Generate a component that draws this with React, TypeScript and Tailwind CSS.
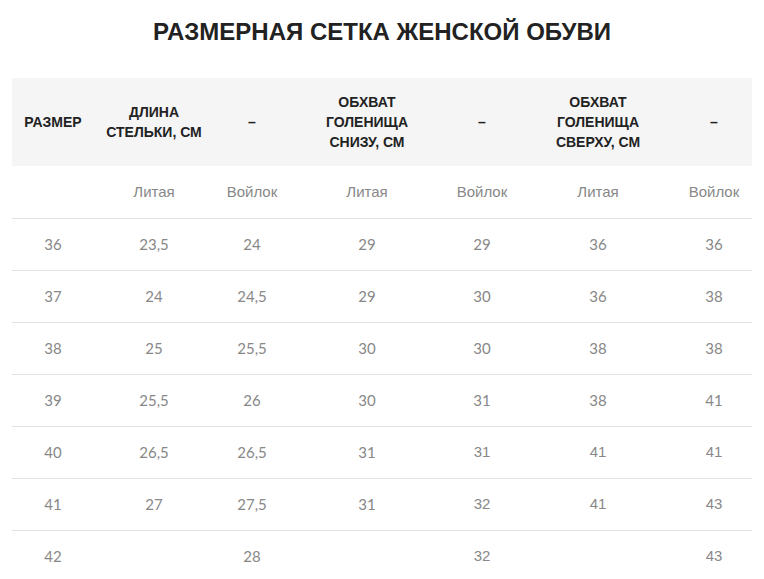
const heads = [
  ["Размер"],
  ["Длина", "стельки, см"],
  ["–"],
  ["Обхват", "голенища", "снизу, см"],
  ["–"],
  ["Обхват", "голенища", "сверху, см"],
  ["–"],
];

const kinds = ["", "Литая", "Войлок", "Литая", "Войлок", "Литая", "Войлок"];

const rows = [
  ["36", "23,5", "24", "29", "29", "36", "36"],
  ["37", "24", "24,5", "29", "30", "36", "38"],
  ["38", "25", "25,5", "30", "30", "38", "38"],
  ["39", "25,5", "26", "30", "31", "38", "41"],
  ["40", "26,5", "26,5", "31", "31", "41", "41"],
  ["41", "27", "27,5", "31", "32", "41", "43"],
  ["42", "", "28", "", "32", "", "43"],
];

// cells pasted with a different font in the original
const arialCells = new Set(["4-4", "4-5", "4-6", "5-4", "5-5", "5-6", "6-4", "6-6"]);

const widths = ["w-[82px]", "w-[120px]", "w-[76px]", "w-[154px]", "w-[76px]", "w-[156px]", "w-[76px]"];

export default function App() {
  return (
    <div className="min-h-[579px] bg-white px-3 font-['Liberation_Sans',Arial,sans-serif]">
      <h1 className="pt-[17px] pb-[31px] text-center text-[24px] leading-[30px] font-bold text-[#222]">
        РАЗМЕРНАЯ СЕТКА ЖЕНСКОЙ ОБУВИ
      </h1>
      <table className="w-[740px] table-fixed border-collapse">
        <thead>
          <tr className="h-[88px] bg-[#f5f5f5]">
            {heads.map((h, i) => (
              <th
                key={i}
                className={`${widths[i]} px-1 text-center text-[14px] leading-[20px] font-bold uppercase text-[#222]`}
              >
                {h.map((line, li) => (
                  <div key={li} className="whitespace-nowrap">
                    {line}
                  </div>
                ))}
              </th>
            ))}
          </tr>
        </thead>
        <tbody>
          <tr className="h-[52px] border-b border-[#e3e3e3]">
            {kinds.map((k, i) => (
              <td key={i} className="text-center text-[15px] text-[#888]">
                {k}
              </td>
            ))}
          </tr>
          {rows.map((r, ri) => (
            <tr key={ri} className="h-[52px] border-b border-[#e3e3e3] last:border-b-0">
              {r.map((v, ci) => (
                <td
                  key={ci}
                  className={
                    arialCells.has(`${ri}-${ci}`)
                      ? "text-center text-[15px] text-[#888]"
                      : "text-center font-['Lato',sans-serif] text-[15px] text-[#888]"
                  }
                >
                  {v}
                </td>
              ))}
            </tr>
          ))}
        </tbody>
      </table>
    </div>
  );
}
